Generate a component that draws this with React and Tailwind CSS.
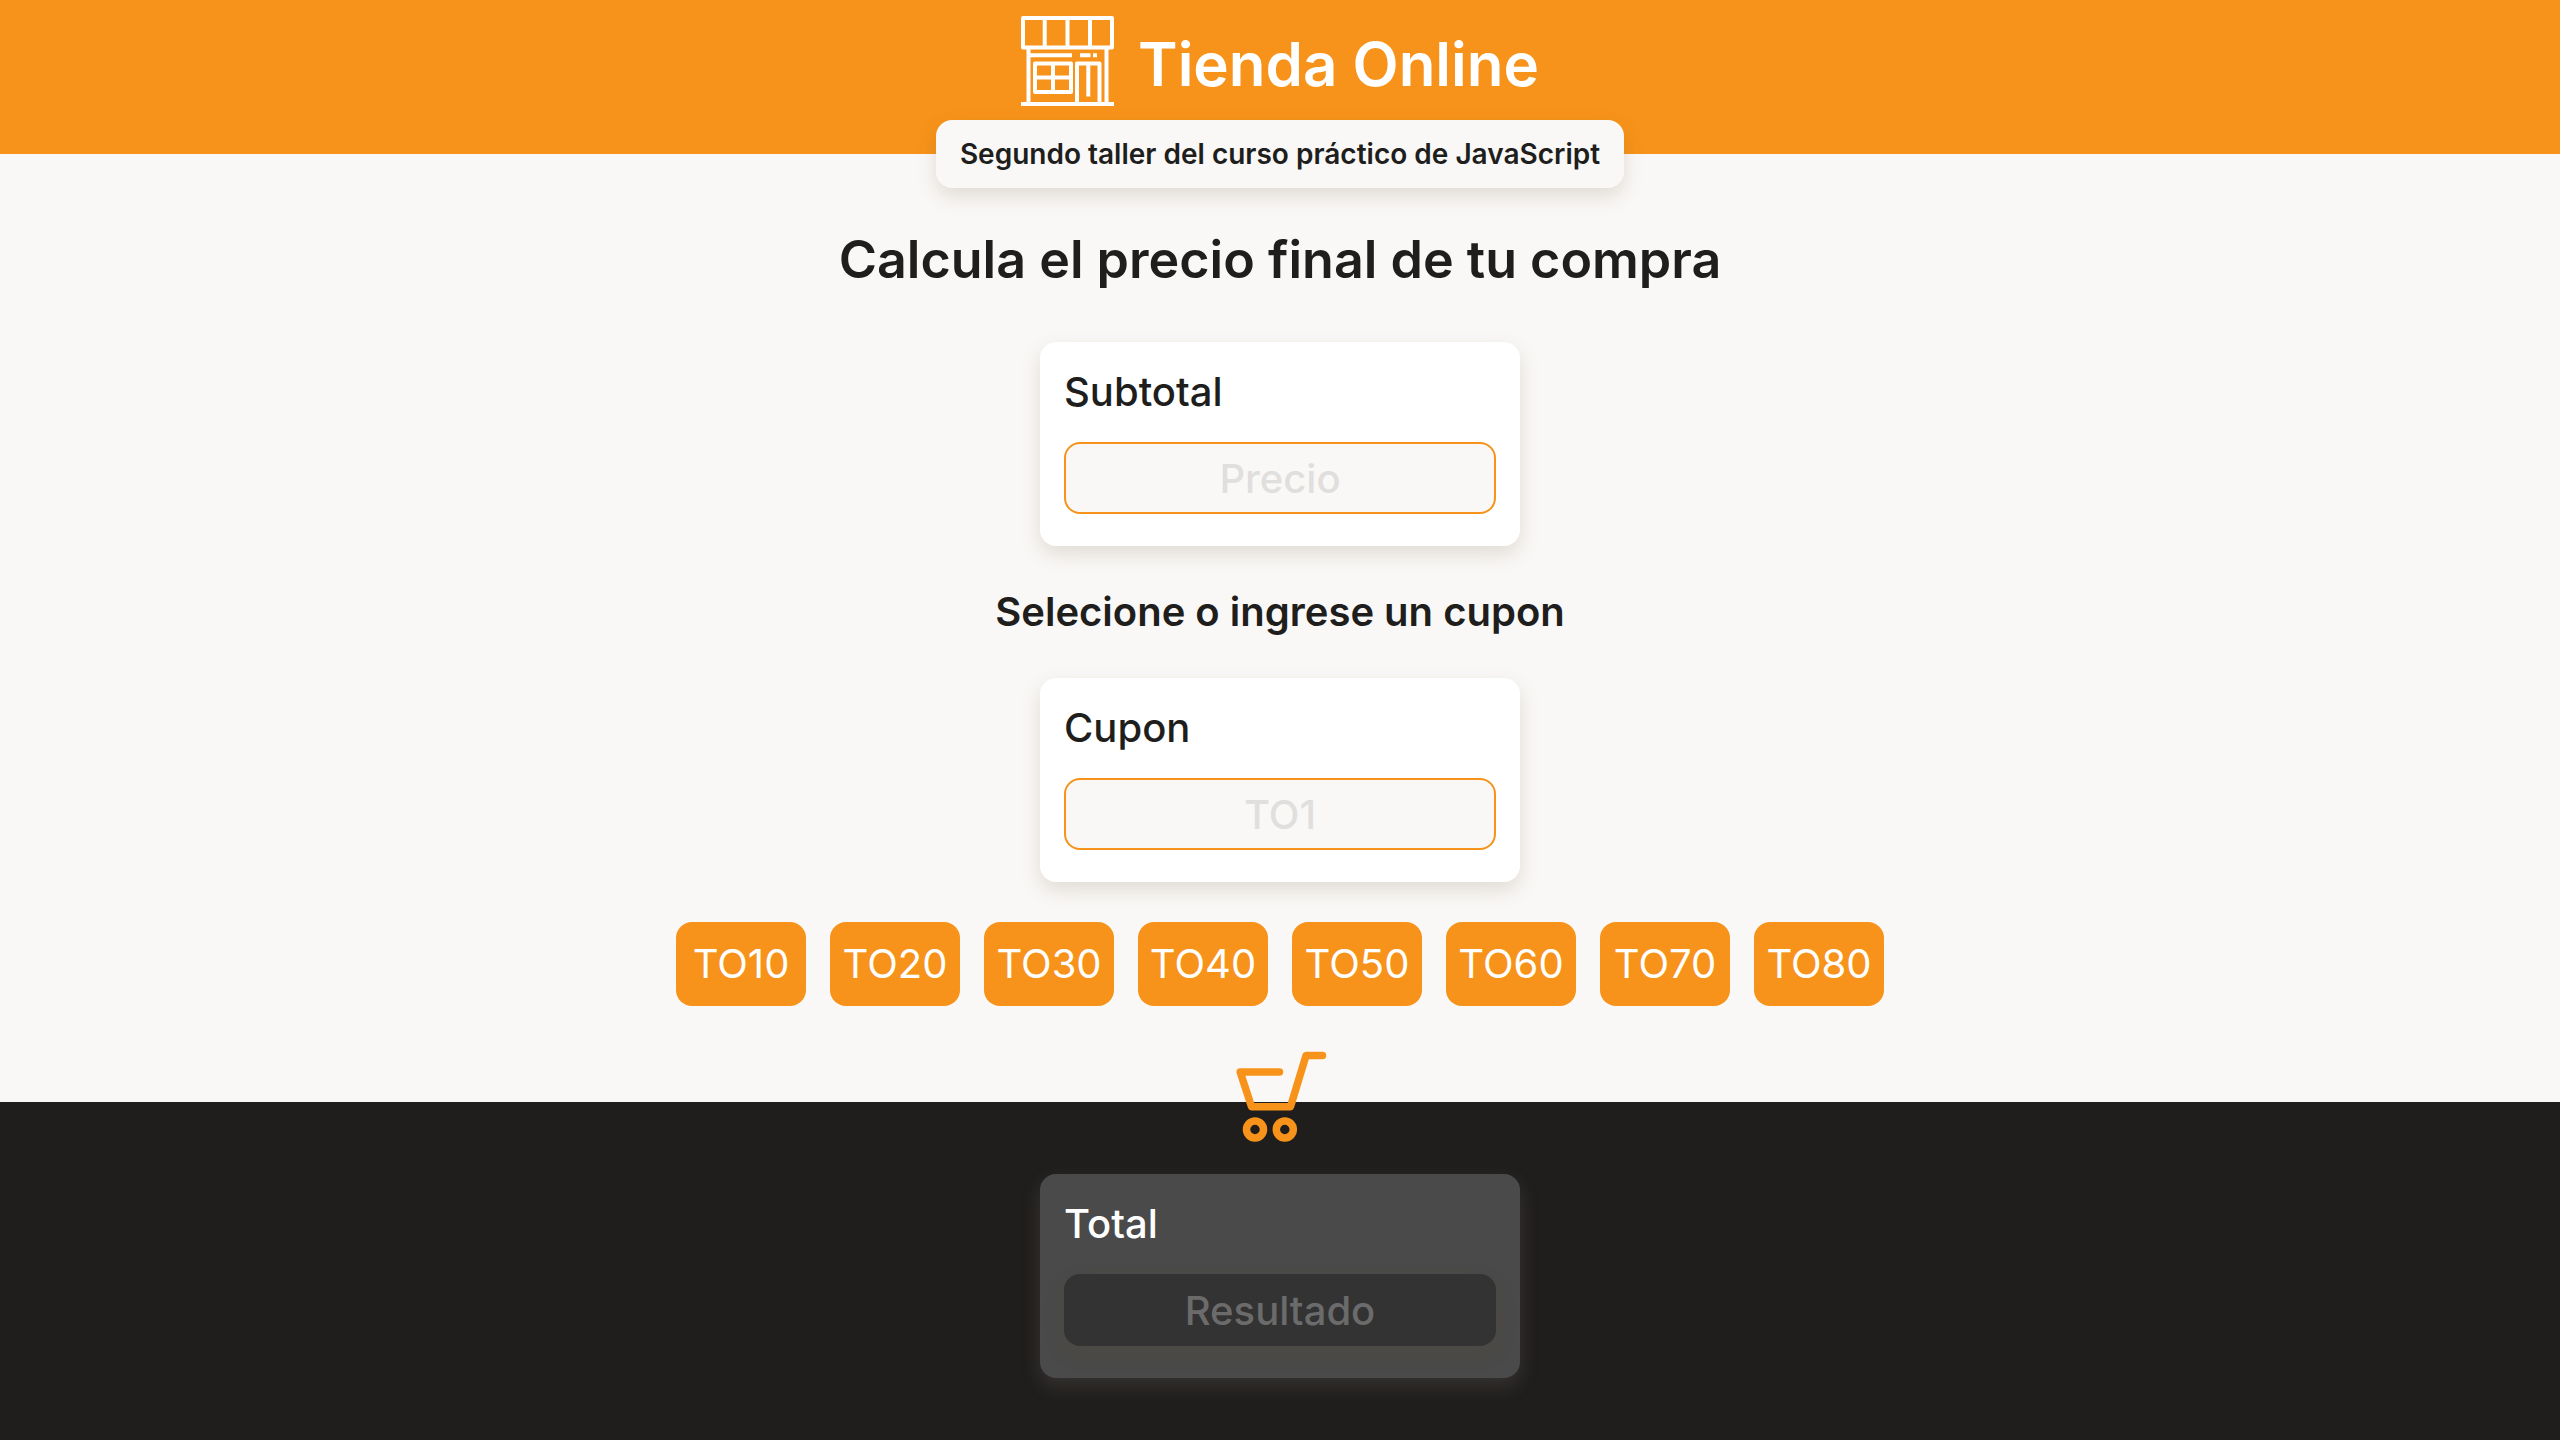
const coupons = ["TO10", "TO20", "TO30", "TO40", "TO50", "TO60", "TO70", "TO80"];

function StoreIcon() {
  return (
    <svg aria-hidden="true" className="h-[90px] w-[93px]" viewBox="0 0 93 90" fill="none" stroke="#fff" strokeWidth="4">
      <path d="M2 2H91V31.5H2Z" strokeLinejoin="round" />
      <path d="M23.7 2V31M46.5 2V31M69 2V31" />
      <path d="M7.5 32V88M85.5 32V88M0 88H93" />
      <path d="M9 39.3H51M59 39.3H69.5M72 39.3H76" />
      <path d="M14 47.5H50V76H14ZM32 47.5V76M14 61.5H50" strokeLinejoin="round" />
      <path d="M56 87V47.5H78.5V87M67.3 48V80.5" strokeLinejoin="round" />
    </svg>
  );
}

function CartIcon() {
  return (
    <svg aria-hidden="true" className="h-[92px] w-24" viewBox="0 0 96 92" fill="none" stroke="#f7931a" strokeWidth="7.5" strokeLinecap="round" strokeLinejoin="round">
      <path d="M47.5 22H8.2L19.5 56.7H58.5L74 5.6H90.5" />
      <circle cx="23" cy="79.5" r="8.5" />
      <circle cx="52.8" cy="79.5" r="8.5" />
    </svg>
  );
}

function Field({ id, label, placeholder, dark }) {
  return (
    <div
      className={
        "w-full max-w-[480px] rounded-2xl px-6 pt-6 pb-8 " +
        (dark
          ? "bg-[#4a4a4a] text-white shadow-[0_8px_20px_rgba(157,148,148,0.18)]"
          : "bg-white shadow-[0_8px_20px_rgba(89,73,30,0.16)]")
      }
    >
      <label htmlFor={id} className="block text-[40px] leading-[52px] font-medium">
        {label}
      </label>
      <input
        id={id}
        type="text"
        placeholder={placeholder}
        readOnly={dark}
        className={
          "mt-6 block h-[72px] w-full rounded-2xl px-4 text-center text-[40px] font-medium outline-none " +
          (dark
            ? "bg-[#333333] shadow-[0_8px_20px_rgba(89,73,30,0.16)] placeholder:text-[#6b6b6b]"
            : "border-2 border-[#f7931a] bg-[#faf8f7] placeholder:text-[#e0dfde]")
        }
      />
    </div>
  );
}

export default function App() {
  return (
    <div className="flex min-h-screen flex-col bg-[#faf8f7] font-['Inter',sans-serif] text-[#201e1c]">
      <header className="flex flex-col items-center">
        <div className="flex h-[154px] w-full justify-center gap-6 bg-[#f7931a] pt-4 text-white">
          <StoreIcon />
          <h1 className="mt-2 text-[60px] leading-[80px] font-semibold">Tienda Online</h1>
        </div>
        <p className="-mt-[34px] rounded-2xl bg-[#faf8f7] px-6 py-4 text-[28px] leading-9 font-semibold shadow-[0_8px_20px_rgba(89,73,30,0.16)]">
          Segundo taller del curso práctico de JavaScript
        </p>
      </header>
      <main className="flex flex-col items-center px-6 pt-9">
        <h2 className="text-center text-[52px] leading-[72px] font-semibold">Calcula el precio final de tu compra</h2>
        <form className="mt-[46px] flex w-full flex-col items-center">
          <Field id="subtotal" label="Subtotal" placeholder="Precio" />
          <h3 className="my-10 text-center text-[40px] leading-[52px] font-semibold">Selecione o ingrese un cupon</h3>
          <Field id="cupon" label="Cupon" placeholder="TO1" />
          <div className="mt-10 flex flex-wrap justify-center gap-6">
            {coupons.map((c) => (
              <button key={c} type="button" className="h-[84px] w-[130px] rounded-2xl bg-[#f7931a] text-[40px] font-normal text-white">
                {c}
              </button>
            ))}
          </div>
        </form>
      </main>
      <footer className="mt-24 flex grow flex-col items-center bg-[#201e1c] px-6 pb-14">
        <div className="-mt-[52px] mb-8">
          <CartIcon />
        </div>
        <Field id="total" label="Total" placeholder="Resultado" dark />
      </footer>
    </div>
  );
}
